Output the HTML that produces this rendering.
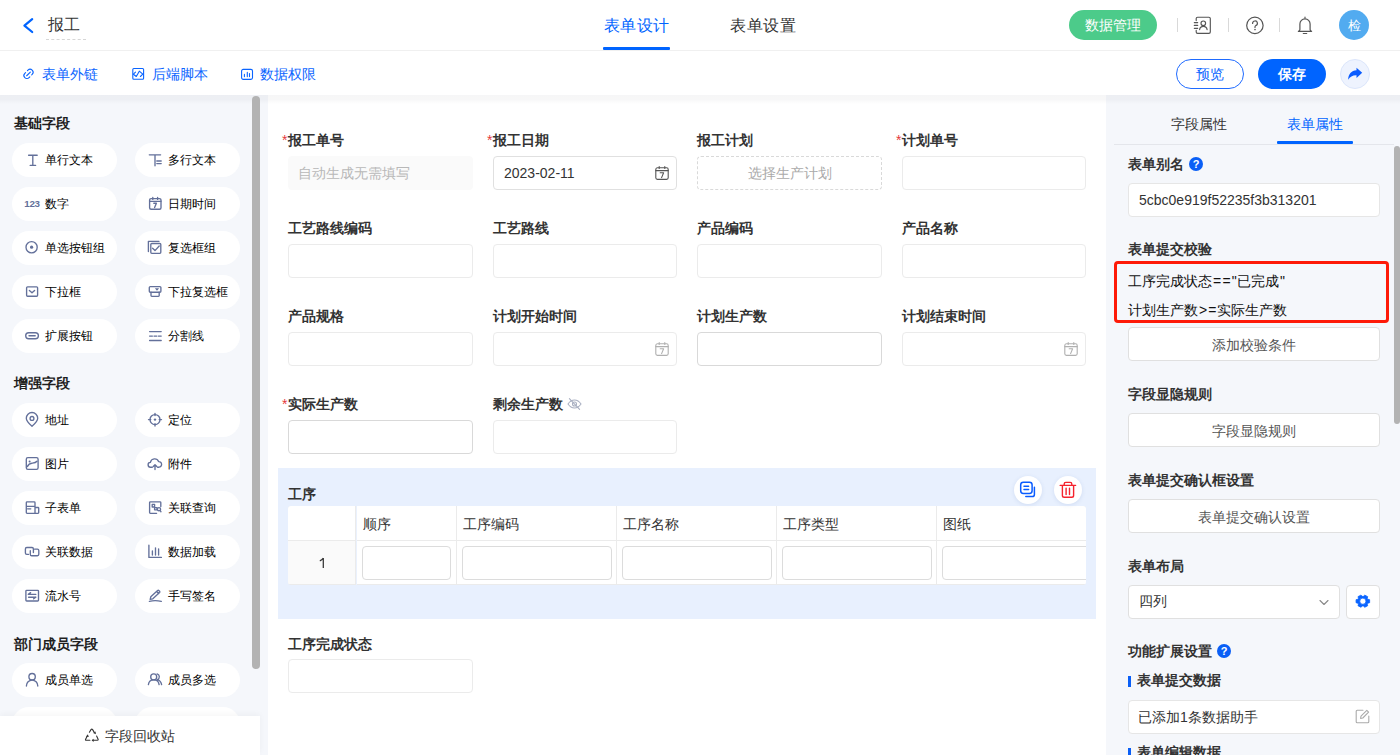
<!DOCTYPE html>
<html><head><meta charset="utf-8">
<style>
*{box-sizing:border-box;margin:0;padding:0}
html,body{width:1400px;height:755px;overflow:hidden;background:#fff;font-family:"Liberation Sans",sans-serif;color:#333}
.a{position:absolute}
.t{position:absolute;white-space:nowrap;line-height:1}
svg{position:absolute;overflow:visible}
#hdr{position:absolute;left:0;top:0;width:1400px;height:51px;border-bottom:1px solid #f0f0f0;background:#fff}
#tb{position:absolute;left:0;top:51px;width:1400px;height:44px;background:#fff}
#left{position:absolute;left:0;top:95px;width:260px;height:660px;background:#f5f7fb}
#strip{position:absolute;left:260px;top:95px;width:8px;height:660px;background:#f5f7fb}
#canvas{position:absolute;left:268px;top:95px;width:838px;height:660px;background:#fff}
#right{position:absolute;left:1106px;top:95px;width:294px;height:660px;background:#f5f7fb}
.shadow{position:absolute;left:0;top:95px;width:1400px;height:9px;background:linear-gradient(rgba(0,0,20,.035),rgba(0,0,20,.03) 50%,rgba(0,0,20,0))}
.pill{position:absolute;width:105px;height:34px;border-radius:17px;background:#fff}
.pill .t{top:11px;font-size:12px;color:#000}
.sec{font-size:14px;font-weight:bold;color:#1f1f1f}
.lbl{font-size:14px;font-weight:bold;color:#333}
.req{color:#e5393b;font-weight:normal;position:absolute;left:-6px;top:0}
.inp{position:absolute;height:34px;border:1px solid #ebebeb;border-radius:4px;background:#fff}
.btnw{position:absolute;left:1128px;width:252px;height:34px;border:1px solid #e0e0e0;border-radius:4px;background:#fff}
.btnw .t{width:100%;text-align:center;top:9.5px;font-size:14px;color:#555}
.rsec{font-size:14px;font-weight:bold;color:#333}
.th{position:absolute;top:507px;height:34px;background:#fff}
.td{position:absolute;top:541px;height:43px;background:#fff}
.th .t{left:6px;top:11px;font-size:14px;color:#333}
.cin{position:absolute;top:4.5px;left:6px;height:34px;border:1px solid #dcdcdc;border-radius:4px;background:#fff}
</style></head><body>
<div id="hdr"></div>
<div id="tb"></div>
<div id="left"></div>
<div id="strip"></div>
<div id="canvas"></div>
<div id="right"></div>
<div class="shadow"></div>

<!-- header -->
<svg style="left:23px;top:18px" width="11" height="15" viewBox="0 0 11 15"><path d="M9.2 1.2 L1.4 7.6 L9.2 14" fill="none" stroke="#0064ff" stroke-width="2.2" stroke-linecap="round" stroke-linejoin="round"/></svg>
<div class="t" style="left:48px;top:17px;font-size:16px;color:#333">报工</div>
<div class="a" style="left:46px;top:39px;width:40px;border-top:1px dashed #d6d6d6"></div>
<div class="t" style="left:603.5px;top:18px;font-size:16px;letter-spacing:.6px;color:#0064ff">表单设计</div>
<div class="a" style="left:603px;top:47px;width:67px;height:3px;background:#0064ff;border-radius:1px"></div>
<div class="t" style="left:730px;top:18px;font-size:16px;letter-spacing:.6px;color:#333">表单设置</div>
<div class="a" style="left:1069px;top:10px;width:88px;height:30px;border-radius:15px;background:#4ccb8a"></div>
<div class="t" style="left:1085px;top:18px;font-size:14px;color:#fff">数据管理</div>
<div class="a" style="left:1177px;top:18px;width:1px;height:14px;background:#d9d9d9"></div>
<div class="a" style="left:1228px;top:18px;width:1px;height:14px;background:#d9d9d9"></div>
<div class="a" style="left:1279px;top:18px;width:1px;height:14px;background:#d9d9d9"></div>
<!-- contacts icon -->
<svg style="left:1186px;top:10px" width="34" height="30" viewBox="0 0 34 30"><g fill="none" stroke="#555" stroke-width="1.15" stroke-linecap="round" stroke-linejoin="round"><path d="M10.2 10.6V8.6Q10.2 7.2 11.6 7.2H22.9Q24.3 7.2 24.3 8.6V21.9Q24.3 23.3 22.9 23.3H11.6Q10.2 23.3 10.2 21.9V20.2M8.3 12.6H11.7M8.3 15.4H11.7M8.3 18.3H11.7"/><circle cx="17.3" cy="13.3" r="2.3"/><path d="M13.6 19.6A3.8 3.9 0 0 1 21.1 19.6"/></g></svg>
<!-- help icon -->
<svg style="left:1240px;top:10px" width="80" height="30" viewBox="0 0 80 30"><g fill="none" stroke="#555" stroke-width="1.2" stroke-linecap="round" stroke-linejoin="round"><circle cx="14.9" cy="15.4" r="8.2"/><path d="M12.6 13.4A2.4 2.4 0 1 1 15.6 15.7Q15 16 15 16.9V17.4"/><path d="M65 7.2V7.9M59.9 19.6V14A5.1 5.1 0 0 1 70.1 14V19.6Q70.3 20.9 71.6 21.4H58.4Q59.7 20.9 59.9 19.6ZM63.3 23.5H66.7"/></g><circle cx="15" cy="19.6" r="0.8" fill="#555"/></svg>

<div class="a" style="left:1339px;top:10px;width:30px;height:30px;border-radius:15px;background:#52abf0"></div>
<div class="t" style="left:1348px;top:19px;font-size:13px;color:#fff">检</div>

<!-- toolbar -->
<svg style="left:18px;top:62px" width="40" height="24" viewBox="0 0 40 24"><g fill="none" stroke="#0a64ff" stroke-width="1.1" stroke-linecap="round" transform="rotate(-45 10.5 11.9)"><path d="M12 8.9H12.7A3 3 0 0 1 12.7 14.9H12M9.4 14.9H8.3A3 3 0 0 1 8.3 8.9H9.4M7.9 11.9H13.1"/></g></svg>
<div class="t" style="left:42px;top:67px;font-size:14px;color:#0a64ff">表单外链</div>
<svg style="left:128px;top:62px" width="30" height="24" viewBox="0 0 30 24"><g fill="none" stroke="#0a64ff" stroke-width="1.1" stroke-linecap="round" stroke-linejoin="round"><rect x="4.8" y="6.5" width="10.8" height="10.8" rx="1"/><path d="M7.5 10.2L5.4 12.2L8.3 14.5L11.3 9.2L14.8 12.2L12.4 14.5"/></g></svg>
<div class="t" style="left:152px;top:67px;font-size:14px;color:#0a64ff">后端脚本</div>
<svg style="left:236px;top:62px" width="30" height="24" viewBox="0 0 30 24"><g fill="none" stroke="#0a64ff" stroke-width="1.1" stroke-linecap="round"><rect x="5.6" y="7.4" width="10.9" height="10" rx="1.6"/><path d="M8.4 12.4V14.6M11.3 10.4V14.6M13.5 11.6V14.6"/></g></svg>
<div class="t" style="left:260px;top:67px;font-size:14px;color:#0a64ff">数据权限</div>

<div class="a" style="left:1176px;top:59px;width:68px;height:30px;border:1px solid #1f6bff;border-radius:15px;background:#fff"></div>
<div class="t" style="left:1196px;top:67px;font-size:14px;color:#0a64ff;font-weight:500">预览</div>
<div class="a" style="left:1258px;top:59px;width:68px;height:30px;border-radius:15px;background:#0064ff"></div>
<div class="t" style="left:1278px;top:67px;font-size:14px;color:#fff;font-weight:bold">保存</div>
<div class="a" style="left:1340px;top:59px;width:30px;height:30px;border:1px solid #dce6fb;border-radius:15px;background:#eef3fe"></div>
<svg style="left:1338px;top:57px" width="34" height="34" viewBox="0 0 34 34"><path d="M18.5 10.8L24.2 15.7L18.5 21V18.2C14.6 18.1 12 19.6 10.2 22.8C10.2 17.2 13.4 13.4 18.5 13.2Z" fill="#0a5cff"/></svg>

<div class="t sec" style="left:14px;top:116px">基础字段</div>
<div class="pill" style="left:12px;top:143px"><div class="t" style="left:33px">单行文本</div></div>
<svg style="left:20px;top:148px" width="24" height="24" viewBox="0 0 24 24" ><g fill="none" stroke="#63709a" stroke-width="1.35" stroke-linecap="round" stroke-linejoin="round"><path d="M8.6 7.2H17.2M10.2 17.4H15.6M12.8 7.2V17.4"/></g></svg>
<div class="pill" style="left:135px;top:143px"><div class="t" style="left:33px">多行文本</div></div>
<svg style="left:142px;top:148px" width="24" height="24" viewBox="0 0 24 24" ><g fill="none" stroke="#63709a" stroke-width="1.35" stroke-linecap="round" stroke-linejoin="round"><path d="M7.3 6.8H18.6M13 6.8V17.8M14.8 13H19.2M14.8 15.6H19.2"/></g></svg>
<div class="pill" style="left:12px;top:187px"><div class="t" style="left:33px">数字</div></div>
<svg style="left:20px;top:192px" width="24" height="24" viewBox="0 0 24 24" ><text x="4.3" y="15" font-family="Liberation Sans" font-weight="bold" font-size="9.8" fill="#63709a" letter-spacing="-0.3">123</text></svg>
<div class="pill" style="left:135px;top:187px"><div class="t" style="left:33px">日期时间</div></div>
<svg style="left:142px;top:192px" width="24" height="24" viewBox="0 0 24 24" ><g fill="none" stroke="#63709a" stroke-width="1.35" stroke-linecap="round" stroke-linejoin="round"><rect x="7.6" y="6.6" width="11.4" height="10.6" rx="1.5"/><path d="M7.6 9.3H19M10.8 5.4V7.4M15.6 5.4V7.4M11.8 11.2H14.4L12.6 15.6"/></g></svg>
<div class="pill" style="left:12px;top:231px"><div class="t" style="left:33px">单选按钮组</div></div>
<svg style="left:20px;top:236px" width="24" height="24" viewBox="0 0 24 24" ><g fill="none" stroke="#63709a" stroke-width="1.35" stroke-linecap="round" stroke-linejoin="round"><circle cx="11.6" cy="11.2" r="5.6"/></g><circle cx="11.6" cy="11.2" r="1.6" fill="#63709a"/></svg>
<div class="pill" style="left:135px;top:231px"><div class="t" style="left:33px">复选框组</div></div>
<svg style="left:142px;top:236px" width="24" height="24" viewBox="0 0 24 24" ><g fill="none" stroke="#63709a" stroke-width="1.35" stroke-linecap="round" stroke-linejoin="round"><path d="M6.4 15.6V5.3H17"/><rect x="8.8" y="7.5" width="10" height="9.8" rx="1"/><path d="M10.6 12.2L13 14.6L17.2 10"/></g></svg>
<div class="pill" style="left:12px;top:275px"><div class="t" style="left:33px">下拉框</div></div>
<svg style="left:20px;top:280px" width="24" height="24" viewBox="0 0 24 24" ><g fill="none" stroke="#63709a" stroke-width="1.35" stroke-linecap="round" stroke-linejoin="round"><rect x="6.6" y="6.8" width="11" height="9.4" rx="1"/><path d="M9.4 10.4L12 12.8L14.6 10.4"/></g></svg>
<div class="pill" style="left:135px;top:275px"><div class="t" style="left:33px">下拉复选框</div></div>
<svg style="left:142px;top:280px" width="24" height="24" viewBox="0 0 24 24" ><g fill="none" stroke="#63709a" stroke-width="1.35" stroke-linecap="round" stroke-linejoin="round"><rect x="7.3" y="6.6" width="11.6" height="5.6" rx="1"/><path d="M9 12.2V15.5Q9 16.3 9.8 16.3H16.4Q17.2 16.3 17.2 15.5V12.2M14 8.6L15 9.8L16 8.6"/></g></svg>
<div class="pill" style="left:12px;top:319px"><div class="t" style="left:33px">扩展按钮</div></div>
<svg style="left:20px;top:324px" width="24" height="24" viewBox="0 0 24 24" ><g fill="none" stroke="#63709a" stroke-width="1.35" stroke-linecap="round" stroke-linejoin="round"><rect x="5.7" y="8.7" width="12.7" height="6" rx="3"/><path d="M9 11.7H15.2"/></g></svg>
<div class="pill" style="left:135px;top:319px"><div class="t" style="left:33px">分割线</div></div>
<svg style="left:142px;top:324px" width="24" height="24" viewBox="0 0 24 24" ><g fill="none" stroke="#63709a" stroke-width="1.35" stroke-linecap="round" stroke-linejoin="round"><path d="M7.6 7.6H19.2M7.6 16.5H19.2M7.6 12.1H10.4M12 12.1H14.8M16.4 12.1H19.2"/></g></svg>
<div class="t sec" style="left:14px;top:376px">增强字段</div>
<div class="pill" style="left:12px;top:403px"><div class="t" style="left:33px">地址</div></div>
<svg style="left:20px;top:408px" width="24" height="24" viewBox="0 0 24 24" ><g fill="none" stroke="#63709a" stroke-width="1.35" stroke-linecap="round" stroke-linejoin="round"><path d="M12 18.2C9 15.6 6.3 13 6.3 10.2A5.7 5.7 0 0 1 17.7 10.2C17.7 13 15 15.6 12 18.2Z"/><circle cx="12" cy="10.4" r="1.9"/></g></svg>
<div class="pill" style="left:135px;top:403px"><div class="t" style="left:33px">定位</div></div>
<svg style="left:142px;top:408px" width="24" height="24" viewBox="0 0 24 24" ><g fill="none" stroke="#63709a" stroke-width="1.35" stroke-linecap="round" stroke-linejoin="round"><circle cx="13" cy="11.6" r="5"/><path d="M13 5.3V7.6M13 15.6V18M6.5 11.6H8.8M17.2 11.6H19.5"/></g><circle cx="13" cy="11.6" r="1.2" fill="#63709a"/></svg>
<div class="pill" style="left:12px;top:447px"><div class="t" style="left:33px">图片</div></div>
<svg style="left:20px;top:452px" width="24" height="24" viewBox="0 0 24 24" ><g fill="none" stroke="#63709a" stroke-width="1.35" stroke-linecap="round" stroke-linejoin="round"><rect x="6.3" y="5.6" width="11.8" height="11.8" rx="1.6"/><path d="M7.3 14.6C8.5 12 10 11.4 12.5 11.2C14.5 11 16 10.5 17 9.3"/></g><circle cx="9.6" cy="9.4" r="1" fill="#63709a"/></svg>
<div class="pill" style="left:135px;top:447px"><div class="t" style="left:33px">附件</div></div>
<svg style="left:142px;top:452px" width="24" height="24" viewBox="0 0 24 24" ><g fill="none" stroke="#63709a" stroke-width="1.35" stroke-linecap="round" stroke-linejoin="round"><path d="M10.3 15.2H8.6A2.4 2.4 0 0 1 8.4 10.4A4.3 4.3 0 0 1 16.6 9.6A2.8 2.8 0 0 1 17 15.2H15.6"/><path d="M13 17.6V13M11.2 14.6L13 12.8L14.8 14.6"/></g></svg>
<div class="pill" style="left:12px;top:491px"><div class="t" style="left:33px">子表单</div></div>
<svg style="left:20px;top:496px" width="24" height="24" viewBox="0 0 24 24" ><g fill="none" stroke="#63709a" stroke-width="1.35" stroke-linecap="round" stroke-linejoin="round"><path d="M15 11.5V6.7Q15 5.9 14.2 5.9H7.1Q6.3 5.9 6.3 6.7V16.6Q6.3 17.4 7.1 17.4H18Q18.7 17.4 18.7 16.6V12.2Q18.7 11.5 18 11.5H15V17.4M6.3 10.3H15M7.6 12.8H10.8"/></g></svg>
<div class="pill" style="left:135px;top:491px"><div class="t" style="left:33px">关联查询</div></div>
<svg style="left:142px;top:496px" width="24" height="24" viewBox="0 0 24 24" ><g fill="none" stroke="#63709a" stroke-width="1.35" stroke-linecap="round" stroke-linejoin="round"><path d="M18.8 10.6V6.6Q18.8 5.9 18 5.9H8.4Q7.6 5.9 7.6 6.6V16.6Q7.6 17.3 8.4 17.3H14.6"/><rect x="10.2" y="8.4" width="2.4" height="2.6"/><rect x="12.6" y="11.6" width="2.4" height="2.2"/><circle cx="17" cy="13.2" r="1.6"/><path d="M18.2 14.5L19 15.8"/></g></svg>
<div class="pill" style="left:12px;top:535px"><div class="t" style="left:33px">关联数据</div></div>
<svg style="left:20px;top:540px" width="24" height="24" viewBox="0 0 24 24" ><g fill="none" stroke="#63709a" stroke-width="1.35" stroke-linecap="round" stroke-linejoin="round"><path d="M8.5 14.4H6.8Q5.4 14.4 5.4 13V8.9Q5.4 7.5 6.8 7.5H12Q13.4 7.5 13.4 8.9V12.6"/><path d="M10.3 10.7V14.4Q10.3 15.7 11.7 15.7H17.4Q18.8 15.7 18.8 14.3V10.5Q18.8 9.1 17.4 9.1H14.5"/></g></svg>
<div class="pill" style="left:135px;top:535px"><div class="t" style="left:33px">数据加载</div></div>
<svg style="left:142px;top:540px" width="24" height="24" viewBox="0 0 24 24" ><g fill="none" stroke="#63709a" stroke-width="1.35" stroke-linecap="round" stroke-linejoin="round"><path d="M6.9 5.2V17.4H19.4M10.4 11V15M13.5 7.8V15M16.6 8.8V15"/></g></svg>
<div class="pill" style="left:12px;top:579px"><div class="t" style="left:33px">流水号</div></div>
<svg style="left:20px;top:584px" width="24" height="24" viewBox="0 0 24 24" ><g fill="none" stroke="#63709a" stroke-width="1.35" stroke-linecap="round" stroke-linejoin="round"><rect x="5.9" y="6.3" width="12.6" height="10.7" rx="0.8"/><path d="M8.3 10.4H15.8M8.6 13.2H15.8M8.3 10.4L10.6 8.6M15.8 13.2L13.6 14.8"/></g></svg>
<div class="pill" style="left:135px;top:579px"><div class="t" style="left:33px">手写签名</div></div>
<svg style="left:142px;top:584px" width="24" height="24" viewBox="0 0 24 24" ><g fill="none" stroke="#63709a" stroke-width="1.35" stroke-linecap="round" stroke-linejoin="round"><path d="M8.2 15.3L8.8 12.8L15.6 6.6Q16.3 6 17 6.7L17.6 7.3Q18.2 8 17.6 8.6L10.8 14.8Z M14.6 7.6L16.6 9.6"/><path d="M7.4 17.3Q13 16 19.3 17.3"/></g></svg>
<div class="t sec" style="left:14px;top:637px">部门成员字段</div>
<div class="pill" style="left:12px;top:663px"><div class="t" style="left:33px">成员单选</div></div>
<svg style="left:20px;top:668px" width="24" height="24" viewBox="0 0 24 24" ><g fill="none" stroke="#63709a" stroke-width="1.35" stroke-linecap="round" stroke-linejoin="round"><circle cx="12.1" cy="8.7" r="3.2"/><path d="M6.4 18A5.7 5.9 0 0 1 17.8 18"/></g></svg>
<div class="pill" style="left:135px;top:663px"><div class="t" style="left:33px">成员多选</div></div>
<svg style="left:142px;top:668px" width="24" height="24" viewBox="0 0 24 24" ><g fill="none" stroke="#63709a" stroke-width="1.35" stroke-linecap="round" stroke-linejoin="round"><circle cx="11.7" cy="8.9" r="3"/><path d="M6.4 16.6A5.4 5.4 0 0 1 17.1 16.6M15.1 5.9A3 3 0 0 1 15.4 11.6Q18.8 12.6 19.6 16.6"/></g></svg>
<div class="pill" style="left:12px;top:707px"><div class="t" style="left:33px"></div></div>
<div class="pill" style="left:135px;top:707px"><div class="t" style="left:33px"></div></div>
<div class="a" style="left:252px;top:96px;width:8px;height:573px;border-radius:4px 4px 4px 4px;background:#b3b3b3"></div>
<div class="a" style="left:0;top:716px;width:260px;height:39px;background:#fff;box-shadow:0 -2px 6px rgba(0,0,0,.04)"></div>
<svg style="left:78px;top:722px" width="30" height="26" viewBox="0 0 30 26"><g fill="none" stroke="#333" stroke-width="1.1" stroke-linecap="round" stroke-linejoin="round"><path d="M11.4 10.2L13 7.6Q13.8 6.6 14.6 7.6L16.4 10.6M18.6 14.1L20.1 17.3Q20.5 18.3 19.4 18.3H14.8M11.9 18.3H8.2Q7.1 18.3 7.6 17.3L9.4 13.8"/></g><g fill="#333"><path d="M15.2 10.9L17.9 12.2L17.6 9.4Z"/><path d="M15.6 16.7L13.6 18.3L15.6 19.9Z"/><path d="M8 14.8L10.8 14.9L9.9 12.2Z"/></g></svg>
<div class="t" style="left:105px;top:729px;font-size:14px;color:#333">字段回收站</div>

<!-- canvas form -->
<div class="t lbl" style="left:288px;top:133px"><span class="req">*</span>报工单号</div>
<div class="inp" style="left:288px;top:156px;width:185px;background:#fafafa;border-color:#fafafa"></div>
<div class="t" style="left:298px;top:166px;font-size:14px;color:#b8b8b8">自动生成无需填写</div>
<div class="t lbl" style="left:493px;top:133px"><span class="req">*</span>报工日期</div>
<div class="inp" style="left:493px;top:156px;width:184px;border-color:#e0e0e0"></div>
<div class="t" style="left:504px;top:166px;font-size:14px;color:#333">2023-02-11</div>
<svg style="left:655px;top:166px" width="14" height="14" viewBox="0 0 14 14" ><g fill="none" stroke="#555" stroke-width="1.1" stroke-linecap="round" stroke-linejoin="round"><rect x="0.8" y="1.8" width="12.4" height="11.6" rx="1.6"/><path d="M0.8 4.6H13.2M4.2 0.6V2.4M9.8 0.6V2.4M5.2 6.8H8.6L6.6 11.6"/></g></svg>
<div class="t lbl" style="left:697px;top:133px">报工计划</div>
<div class="inp" style="left:697px;top:156px;width:185px;border:1px dashed #d9d9d9"></div>
<div class="t" style="left:697px;width:185px;text-align:center;top:166px;font-size:14px;color:#aaa">选择生产计划</div>
<div class="t lbl" style="left:902px;top:133px"><span class="req">*</span>计划单号</div>
<div class="inp" style="left:902px;top:156px;width:184px;border-color:#ebebeb"></div>
<div class="t lbl" style="left:288px;top:221px">工艺路线编码</div>
<div class="inp" style="left:288px;top:244px;width:185px;border-color:#ebebeb"></div>
<div class="t lbl" style="left:493px;top:221px">工艺路线</div>
<div class="inp" style="left:493px;top:244px;width:184px;border-color:#ebebeb"></div>
<div class="t lbl" style="left:697px;top:221px">产品编码</div>
<div class="inp" style="left:697px;top:244px;width:185px;border-color:#ebebeb"></div>
<div class="t lbl" style="left:902px;top:221px">产品名称</div>
<div class="inp" style="left:902px;top:244px;width:184px;border-color:#ebebeb"></div>
<div class="t lbl" style="left:288px;top:309px">产品规格</div>
<div class="inp" style="left:288px;top:332px;width:185px;border-color:#ebebeb"></div>
<div class="t lbl" style="left:493px;top:309px">计划开始时间</div>
<div class="inp" style="left:493px;top:332px;width:184px;border-color:#ebebeb"></div>
<svg style="left:655px;top:342px" width="14" height="14" viewBox="0 0 14 14" ><g fill="none" stroke="#b0b0b0" stroke-width="1.1" stroke-linecap="round" stroke-linejoin="round"><rect x="0.8" y="1.8" width="12.4" height="11.6" rx="1.6"/><path d="M0.8 4.6H13.2M4.2 0.6V2.4M9.8 0.6V2.4M5.2 6.8H8.6L6.6 11.6"/></g></svg>
<div class="t lbl" style="left:697px;top:309px">计划生产数</div>
<div class="inp" style="left:697px;top:332px;width:185px;border-color:#d9d9d9"></div>
<div class="t lbl" style="left:902px;top:309px">计划结束时间</div>
<div class="inp" style="left:902px;top:332px;width:184px;border-color:#ebebeb"></div>
<svg style="left:1064px;top:342px" width="14" height="14" viewBox="0 0 14 14" ><g fill="none" stroke="#b0b0b0" stroke-width="1.1" stroke-linecap="round" stroke-linejoin="round"><rect x="0.8" y="1.8" width="12.4" height="11.6" rx="1.6"/><path d="M0.8 4.6H13.2M4.2 0.6V2.4M9.8 0.6V2.4M5.2 6.8H8.6L6.6 11.6"/></g></svg>
<div class="t lbl" style="left:288px;top:397px"><span class="req">*</span>实际生产数</div>
<div class="inp" style="left:288px;top:420px;width:185px;border-color:#d9d9d9"></div>
<div class="t lbl" style="left:493px;top:397px">剩余生产数</div>
<div class="inp" style="left:493px;top:420px;width:184px;border-color:#ebebeb"></div>
<svg style="left:567px;top:397px" width="15" height="14" viewBox="0 0 15 14" ><g fill="none" stroke="#a9b0c2" stroke-width="1.1" stroke-linecap="round"><path d="M1 7C3 4 5 3 7.5 3S12 4 14 7C12 10 10 11 7.5 11S3 10 1 7Z"/><circle cx="7.5" cy="7" r="2"/><path d="M2.4 1.6L12.6 12.4"/></g></svg>
<div class="a" style="left:278px;top:468px;width:818px;height:151px;background:#e8f0fe"></div>
<div class="t lbl" style="left:288px;top:487px">工序</div>
<div class="a" style="left:288px;top:506px;width:798px;height:79px;background:#ebebeb;border-radius:3px;overflow:hidden">
<div class="th" style="left:0px;top:0;width:67px"><div class="t"></div></div>
<div class="td" style="left:0px;top:35px;width:67px;background:#fafafa;overflow:hidden"></div>
<div class="th" style="left:69px;top:0;width:99px"><div class="t">顺序</div></div>
<div class="td" style="left:69px;top:35px;width:99px;background:#fff;overflow:hidden"><div class="cin" style="left:5px;width:89px"></div></div>
<div class="th" style="left:169px;top:0;width:159px"><div class="t">工序编码</div></div>
<div class="td" style="left:169px;top:35px;width:159px;background:#fff;overflow:hidden"><div class="cin" style="left:5px;width:150px"></div></div>
<div class="th" style="left:329px;top:0;width:159px"><div class="t">工序名称</div></div>
<div class="td" style="left:329px;top:35px;width:159px;background:#fff;overflow:hidden"><div class="cin" style="left:5px;width:150px"></div></div>
<div class="th" style="left:489px;top:0;width:159px"><div class="t">工序类型</div></div>
<div class="td" style="left:489px;top:35px;width:159px;background:#fff;overflow:hidden"><div class="cin" style="left:5px;width:150px"></div></div>
<div class="th" style="left:649px;top:0;width:149px"><div class="t">图纸</div></div>
<div class="td" style="left:649px;top:35px;width:149px;background:#fff;overflow:hidden"><div class="cin" style="left:5px;width:170px"></div></div>
<div class="a" style="left:68px;top:0;width:1px;height:79px;background:#eaf1fd"></div>
</div>
<svg style="left:316px;top:555px" width="12" height="16" viewBox="0 0 12 16" ><path d="M7.3 13V3M7.3 3.2Q6 5.2 3.8 5.9" fill="none" stroke="#333" stroke-width="1.25" stroke-linecap="butt"/></svg>
<div class="a" style="left:1014px;top:476px;width:28px;height:28px;border-radius:14px;background:#fff;box-shadow:0 1px 4px rgba(40,80,160,.12)"></div>
<div class="a" style="left:1054px;top:476px;width:28px;height:28px;border-radius:14px;background:#fff;box-shadow:0 1px 4px rgba(40,80,160,.12)"></div>
<svg style="left:1012px;top:474px" width="32" height="32" viewBox="0 0 32 32" ><g fill="none" stroke="#0a5cff" stroke-width="1.5" stroke-linecap="round" stroke-linejoin="round"><rect x="8.7" y="8.2" width="11.4" height="11.2" rx="2.6"/><path d="M12 12.3H16.6M12 15.6H16.6M22.4 13.2V20.4Q22.4 22.6 20.2 22.6H13.8"/></g></svg>
<svg style="left:1052px;top:474px" width="32" height="32" viewBox="0 0 32 32" ><g fill="none" stroke="#f5222d" stroke-width="1.4" stroke-linecap="round" stroke-linejoin="round"><path d="M8.2 11.4H23.6M12.2 11.2V10Q12.2 8.4 13.8 8.4H18.2Q19.8 8.4 19.8 10V11.2M10.4 11.6V21.4Q10.4 23.2 12.2 23.2H19.8Q21.6 23.2 21.6 21.4V11.6M14.1 14.3V20.6M17.5 14.3V20.6"/></g></svg>
<div class="t lbl" style="left:288px;top:637px">工序完成状态</div>
<div class="inp" style="left:288px;top:659px;width:185px;height:34px;border-color:#ebebeb"></div>

<div class="t" style="left:1171px;top:117px;font-size:14px;color:#333">字段属性</div>
<div class="t" style="left:1287px;top:117px;font-size:14px;color:#0064ff">表单属性</div>
<div class="a" style="left:1114px;top:144px;width:280px;height:1px;background:#e4e6eb"></div>
<div class="a" style="left:1277px;top:141px;width:76px;height:3px;background:#0064ff;border-radius:1px"></div>
<div class="a" style="left:1394px;top:146px;width:6px;height:278px;border-radius:3px;background:#b3b3b3"></div>
<div class="t rsec" style="left:1128px;top:157px">表单别名</div>
<div class="a" style="left:1189px;top:157px;width:14px;height:14px;border-radius:7px;background:#0a5ff6;color:#fff;font-size:11px;font-weight:bold;line-height:14px;text-align:center">?</div>
<div class="inp" style="left:1128px;top:183px;width:252px;height:34px;border-color:#e6e6e6"></div>
<div class="t" style="left:1139px;top:193px;font-size:14px;color:#333">5cbc0e919f52235f3b313201</div>
<div class="t rsec" style="left:1128px;top:242px">表单提交校验</div>
<div class="t" style="left:1128px;top:274px;font-size:14px;color:#111">工序完成状态<span style="margin-left:1px;letter-spacing:1.2px">==</span><span style="letter-spacing:0.6px">&quot;</span>已完成<span style="margin-left:0.6px">&quot;</span></div>
<div class="t" style="left:1128px;top:303px;font-size:14px;color:#111">计划生产数<span style="margin-left:1px;letter-spacing:1px">&gt;=</span>实际生产数</div>
<div class="a" style="left:1114px;top:261px;width:275px;height:62px;border:3px solid #fe1a08;border-radius:4px"></div>
<div class="btnw" style="top:327px"><div class="t">添加校验条件</div></div>
<div class="t rsec" style="left:1128px;top:387px">字段显隐规则</div>
<div class="btnw" style="top:413px"><div class="t">字段显隐规则</div></div>
<div class="t rsec" style="left:1128px;top:473px">表单提交确认框设置</div>
<div class="btnw" style="top:499px"><div class="t">表单提交确认设置</div></div>
<div class="t rsec" style="left:1128px;top:559px">表单布局</div>
<div class="inp" style="left:1128px;top:585px;width:212px;height:34px;border-color:#e0e0e0"></div>
<div class="t" style="left:1139px;top:594px;font-size:14px;color:#333">四列</div>
<svg style="left:1319px;top:598.5px" width="10" height="7" viewBox="0 0 10 7" ><path d="M1 1.5L5 5.5L9 1.5" fill="none" stroke="#888" stroke-width="1.1" stroke-linecap="round" stroke-linejoin="round"/></svg>
<div class="inp" style="left:1346px;top:585px;width:34px;height:34px;border-color:#e0e0e0"></div>
<svg style="left:1350px;top:590px" width="26" height="24" viewBox="0 0 26 24" ><path fill="#0a64ff" stroke="#0a64ff" stroke-width="0.8" stroke-linejoin="round" fill-rule="evenodd" d="M17.78 9.22 L19.64 9.68 L19.64 12.72 L17.78 13.18 L17.22 14.06 L17.71 15.73 L14.78 17.26 L13.41 16.03 L12.29 16.03 L10.92 17.26 L7.99 15.73 L8.48 14.06 L7.92 13.18 L6.06 12.72 L6.06 9.68 L7.92 9.22 L8.48 8.34 L7.99 6.67 L10.92 5.14 L12.29 6.37 L13.41 6.37 L14.78 5.14 L17.71 6.67 L17.22 8.34Z M15.95 11.20A3.1 3.1 0 1 0 9.75 11.20A3.1 3.1 0 1 0 15.95 11.20Z"/></svg>
<div class="t rsec" style="left:1128px;top:644px">功能扩展设置</div>
<div class="a" style="left:1217px;top:644px;width:14px;height:14px;border-radius:7px;background:#0a5ff6;color:#fff;font-size:11px;font-weight:bold;line-height:14px;text-align:center">?</div>
<div class="a" style="left:1128px;top:676px;width:3px;height:11px;background:#0a5ff6"></div>
<div class="t rsec" style="left:1137px;top:673px">表单提交数据</div>
<div class="inp" style="left:1128px;top:700px;width:252px;height:34px;border-color:#e6e6e6"></div>
<div class="t" style="left:1138px;top:710px;font-size:14px;color:#333">已添加1条数据助手</div>
<svg style="left:1355px;top:709px" width="15" height="15" viewBox="0 0 15 15" ><g fill="none" stroke="#aaa" stroke-width="1.1" stroke-linecap="round" stroke-linejoin="round"><path d="M8 1.2H2.2Q1.2 1.2 1.2 2.2V12.8Q1.2 13.8 2.2 13.8H12.8Q13.8 13.8 13.8 12.8V7"/><path d="M5.6 9.4L6 7.2L11.8 1.4L13.6 3.2L7.8 9Z"/></g></svg>
<div class="a" style="left:1128px;top:748px;width:3px;height:11px;background:#0a5ff6"></div>
<div class="t rsec" style="left:1137px;top:745px">表单编辑数据</div>
</body></html>
